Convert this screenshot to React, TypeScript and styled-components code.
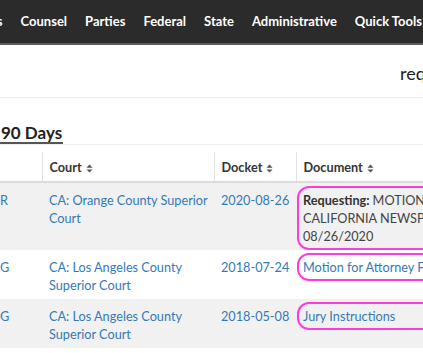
import styled, { createGlobalStyle } from "styled-components";

const GlobalStyle = createGlobalStyle`
  html, body {
    margin: 0;
    padding: 0;
    background: #fff;
    overflow: hidden;
  }
  body {
    font-family: Lato, "Open Sans", sans-serif;
    color: #333;
    width: 423px;
  }
`;

const navItems = ["Dockets", "Counsel", "Parties", "Federal", "State", "Administrative", "Quick Tools", "Help"];

type Row = {
  lead: string;
  court: string;
  docket: string;
  doc: { label?: string; lines: string[]; link: boolean };
  shaded: boolean;
};

const rows: Row[] = [
  {
    lead: "R",
    court: "CA: Orange County Superior Court",
    docket: "2020-08-26",
    doc: {
      label: "Requesting:",
      lines: ["MOTION TO PUBLISH IN", "CALIFORNIA NEWSPAPER", "08/26/2020"],
      link: false,
    },
    shaded: true,
  },
  {
    lead: "G",
    court: "CA: Los Angeles County Superior Court",
    docket: "2018-07-24",
    doc: { lines: ["Motion for Attorney Fees"], link: true },
    shaded: false,
  },
  {
    lead: "G",
    court: "CA: Los Angeles County Superior Court",
    docket: "2018-05-08",
    doc: { lines: ["Jury Instructions"], link: true },
    shaded: true,
  },
];

export default function App() {
  return (
    <Page>
      <GlobalStyle />
      <NavBar>
        <NavList>
          {navItems.map((item, i) => (
            <NavItem key={item} $first={i === 0}>
              {item}
            </NavItem>
          ))}
        </NavList>
      </NavBar>

      <SubHeader>
        <SearchLabel>requests</SearchLabel>
      </SubHeader>

      <Tabs>
        <Tab $active>90 Days</Tab>
      </Tabs>

      <Table>
        <colgroup>
          <col style={{ width: 42 }} />
          <col style={{ width: 172 }} />
          <col style={{ width: 82 }} />
          <col />
        </colgroup>
        <thead>
          <tr>
            <HeadCell $lead></HeadCell>
            <HeadCell>
              Court <SortIcon />
            </HeadCell>
            <HeadCell>
              Docket <SortIcon />
            </HeadCell>
            <HeadCell>
              Document <SortIcon />
            </HeadCell>
          </tr>
        </thead>
        <tbody>
          {rows.map((row, i) => (
            <BodyRow key={i} $shaded={row.shaded}>
              <Cell $nowrap $lead>
                <Link>{row.lead}</Link>
              </Cell>
              <Cell>
                <Link>{row.court}</Link>
              </Cell>
              <Cell $nowrap>
                <Link>{row.docket}</Link>
              </Cell>
              <Cell $nowrap>
                <Highlight>
                  {row.doc.link ? (
                    <Link>{row.doc.lines[0]}</Link>
                  ) : (
                    row.doc.lines.map((line, j) => (
                      <DocLine key={j}>
                        {j === 0 && <strong>{row.doc.label} </strong>}
                        {line}
                      </DocLine>
                    ))
                  )}
                </Highlight>
              </Cell>
            </BodyRow>
          ))}
        </tbody>
      </Table>
    </Page>
  );
}

function SortIcon() {
  return (
    <SortSvg viewBox="0 0 8 10" width="7" height="9">
      <path d="M4 0.5 L7.5 4 L0.5 4 Z" fill="#555" />
      <path d="M4 9.5 L7.5 6 L0.5 6 Z" fill="#555" />
    </SortSvg>
  );
}

const Page = styled.div`
  width: 423px;
  height: 353px;
  overflow: hidden;
`;

const NavBar = styled.nav`
  height: 43px;
  background: #2b2b2b;
  border-bottom: 2px solid #5c5c5c;
  overflow: hidden;
`;

const NavList = styled.ul`
  display: flex;
  align-items: center;
  height: 100%;
  margin: 0;
  padding: 0;
  list-style: none;
  white-space: nowrap;
`;

const NavItem = styled.li<{ $first?: boolean }>`
  flex: none;
  padding: 0 9px 1px;
  margin-left: ${(p) => (p.$first ? "-54px" : "0")};
  color: #fff;
  font-weight: 700;
  font-size: 13px;
  line-height: 20px;
`;

const SubHeader = styled.div`
  height: 52px;
  display: flex;
  align-items: center;
  padding-left: 400px;
  border-bottom: 1px solid #ececec;
  overflow: hidden;
`;

const SearchLabel = styled.span`
  font-size: 18px;
  color: #222;
  white-space: nowrap;
  padding-top: 4px;
`;

const Tabs = styled.div`
  display: flex;
  margin-top: 26px;
  border-bottom: 1px solid #ececec;
`;

const Tab = styled.div<{ $active?: boolean }>`
  font-size: 17px;
  font-weight: 700;
  color: #222;
  line-height: 18px;
  padding: 0 1px;
  border-bottom: 2px solid ${(p) => (p.$active ? "#555" : "transparent")};
`;

const Table = styled.table`
  width: 100%;
  margin-top: 7px;
  border-collapse: collapse;
  table-layout: fixed;
  font-size: 12.7px;
  line-height: 18px;
`;

const HeadCell = styled.th<{ $lead?: boolean }>`
  text-align: left;
  font-weight: 700;
  color: #333;
  padding: 6px 4px 5px 7px;
  padding-left: ${(p) => (p.$lead ? "0" : "7px")};
  white-space: nowrap;
  border-left: ${(p) => (p.$lead ? "none" : "1px solid #e2e2e2")};
  border-bottom: 2px solid #dcdcdc;
`;

const SortSvg = styled.svg`
  vertical-align: -1px;
  margin-left: 1px;
`;

const BodyRow = styled.tr<{ $shaded: boolean }>`
  background: ${(p) => (p.$shaded ? "#f1f1f1" : "#fff")};
`;

const Cell = styled.td<{ $lead?: boolean; $nowrap?: boolean }>`
  vertical-align: top;
  padding: 8px 3px 5px 7px;
  padding-left: ${(p) => (p.$lead ? "0" : "7px")};
  white-space: ${(p) => (p.$nowrap ? "nowrap" : "normal")};
  overflow: visible;
`;

const Link = styled.a`
  color: #337ab7;
  text-decoration: none;
  cursor: pointer;
`;

const Highlight = styled.div`
  margin: -5px -40px -5px -6px;
  padding: 3px 4px;
  border: 2px solid #ff3bdc;
  border-radius: 12px;
  overflow: hidden;
  color: #444;

  strong {
    font-weight: 700;
    color: #333;
  }
`;

const DocLine = styled.div`
  white-space: nowrap;
`;
